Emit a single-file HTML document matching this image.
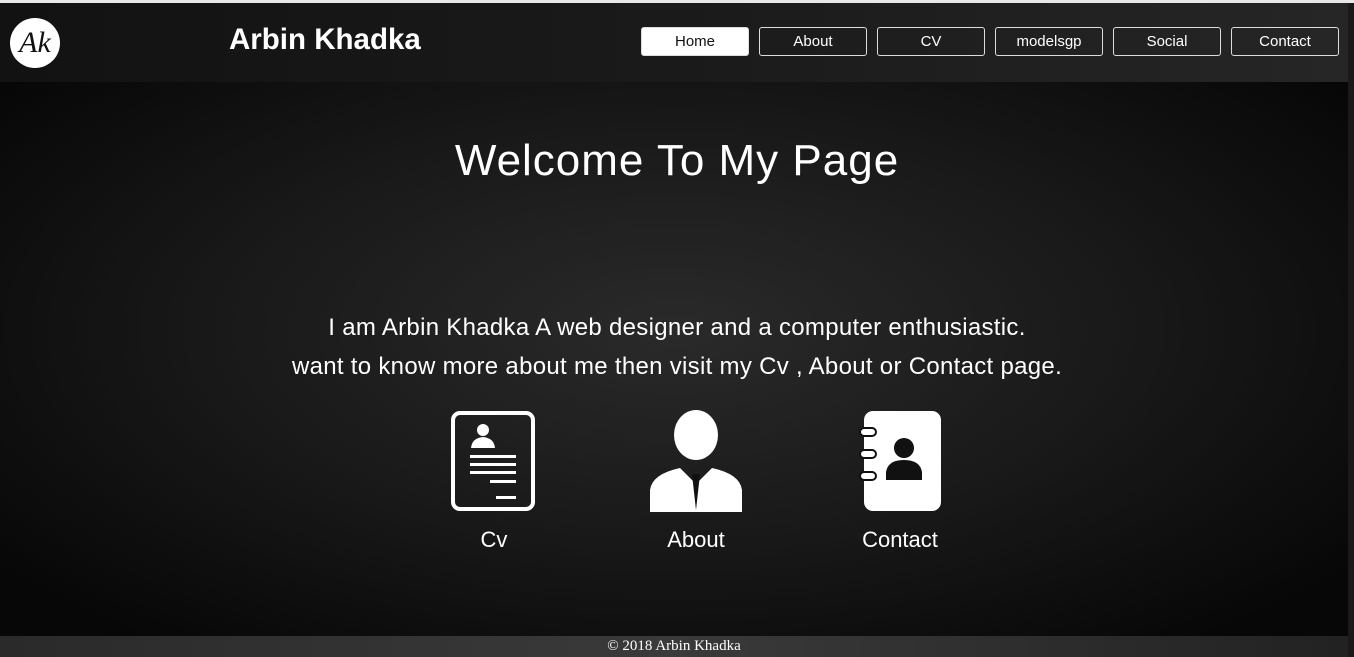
<!DOCTYPE html>
<html><head><meta charset="utf-8"><style>
*{margin:0;padding:0;box-sizing:border-box}
body{width:1354px;height:657px;overflow:hidden;background:#0b0b0b;font-family:"Liberation Sans",sans-serif;color:#fff;position:relative}
.hdr{position:absolute;top:3px;left:0;width:1348px;height:79px;background:linear-gradient(90deg,#121212,#1a1a1a 50%,#262626);}
.top{position:absolute;top:0;left:0;width:1354px;height:3px;background:#e8e8e8}
.logo{position:absolute;left:10px;top:18px;width:50px;height:50px;border-radius:50%;background:#fff;color:#111;font:italic 30px "Liberation Serif",serif;text-align:center;line-height:50px}
.name{position:absolute;left:229px;top:23px;font-size:29.5px;font-weight:bold}
.nav a{position:absolute;top:27px;width:108px;height:29px;border:1px solid #ddd;border-radius:3px;color:#fff;font-size:15px;text-align:center;line-height:27px;text-decoration:none}
.nav a.on{background:#fff;color:#111}
.main{position:absolute;top:82px;left:0;width:1348px;height:554px;background:radial-gradient(ellipse at 50% 45%,#2a2a2a,#181818 50%,#070707 90%)}
h1{position:absolute;top:136px;width:1354px;text-align:center;font-weight:normal;font-size:44px;letter-spacing:1px}
.p{position:absolute;width:1354px;text-align:center;font-size:24px;letter-spacing:.3px}
.lbl{position:absolute;top:527px;font-size:22px;text-align:center;width:140px}
.foot{position:absolute;top:636px;left:0;width:1348px;height:21px;background:linear-gradient(90deg,#2a2a2a,#3a3a3a,#222);font:15px "Liberation Serif",serif;text-align:center;line-height:21px}
.sb{position:absolute;right:0;top:3px;width:6px;height:654px;background:#1a1a1a}
</style></head><body>
<div class="top"></div>
<div class="hdr"></div>
<div class="logo">Ak</div>
<div class="name">Arbin Khadka</div>
<div class="nav">
<a class="on" style="left:641px">Home</a><a style="left:759px">About</a><a style="left:877px">CV</a><a style="left:995px">modelsgp</a><a style="left:1113px">Social</a><a style="left:1231px">Contact</a>
</div>
<div class="main"></div>
<h1>Welcome To My Page</h1>
<div class="p" style="top:314px">I am Arbin Khadka A web designer and a computer enthusiastic.</div>
<div class="p" style="top:353px">want to know more about me then visit my Cv , About or Contact page.</div>
<svg style="position:absolute;left:450px;top:410px" width="86" height="102">
<rect x="3" y="3" width="80" height="96" rx="7" fill="none" stroke="#fff" stroke-width="4"/>
<circle cx="33" cy="20" r="6" fill="#fff"/><path d="M21 38 Q22 28 33 27 Q44 28 45 38Z" fill="#fff"/>
<rect x="20" y="45" width="46" height="3" fill="#fff"/><rect x="20" y="53" width="46" height="3" fill="#fff"/><rect x="20" y="61" width="46" height="3" fill="#fff"/><rect x="40" y="70" width="26" height="3" fill="#fff"/><rect x="46" y="86" width="20" height="3" fill="#fff"/>
</svg>
<svg style="position:absolute;left:650px;top:410px" width="92" height="102">
<ellipse cx="46" cy="25" rx="22" ry="25" fill="#fff"/>
<path d="M0 102 V80 Q2 64 30 58 L46 74 L62 58 Q90 64 92 80 V102Z" fill="#fff"/>
<path d="M42 64 L46 100 L50 64Z" fill="#111"/>
</svg>
<svg style="position:absolute;left:858px;top:410px" width="84" height="102">
<rect x="6" y="1" width="77" height="100" rx="9" fill="#fff"/>
<g fill="#fff" stroke="#111" stroke-width="2"><rect x="2" y="18" width="16" height="8" rx="4"/><rect x="2" y="40" width="16" height="8" rx="4"/><rect x="2" y="62" width="16" height="8" rx="4"/></g>
<circle cx="46" cy="38" r="10" fill="#111"/><path d="M28 70 V62 Q30 50 46 50 Q62 50 64 62 V70Z" fill="#111"/>
</svg>
<div class="lbl" style="left:424px">Cv</div>
<div class="lbl" style="left:626px">About</div>
<div class="lbl" style="left:830px">Contact</div>
<div class="foot">© 2018 Arbin Khadka</div>
<div class="sb"></div>
</body></html>
